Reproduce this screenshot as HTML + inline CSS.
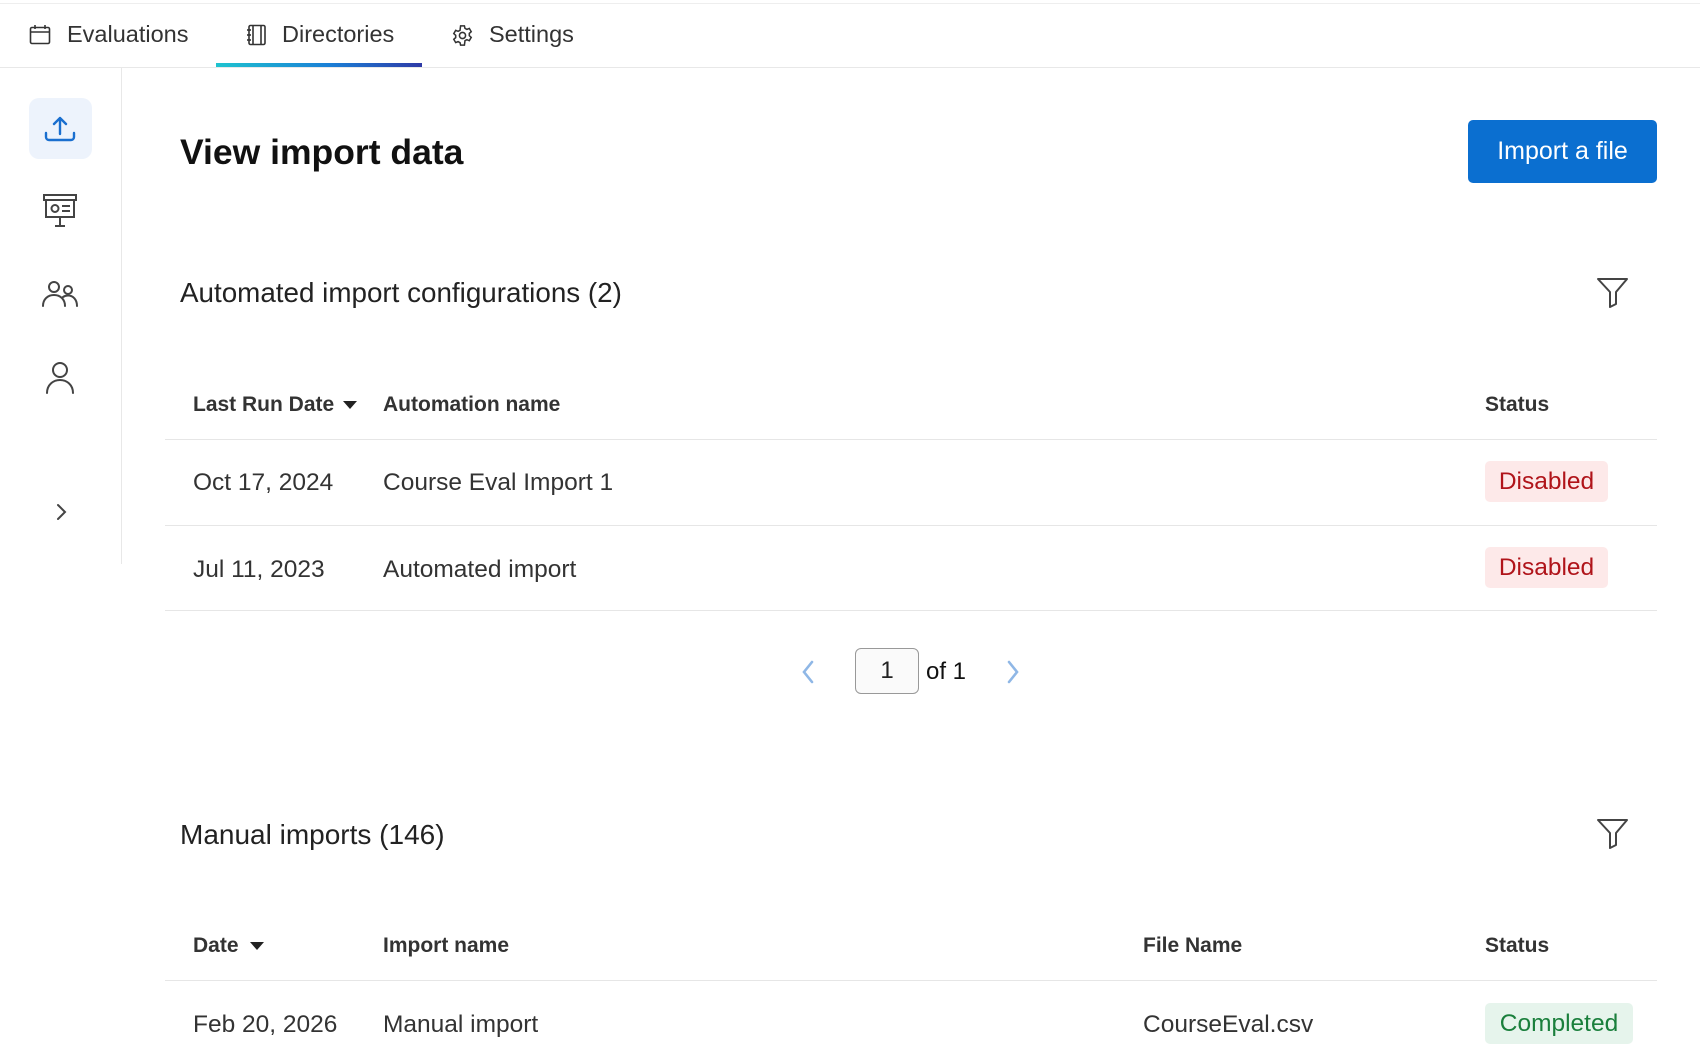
<!DOCTYPE html>
<html><head><meta charset="utf-8"><style>
*{margin:0;padding:0;box-sizing:border-box}
body{width:1700px;height:1064px;background:#fff;font-family:"Liberation Sans",Arial,sans-serif;color:#222;position:relative;overflow:hidden}
.a{position:absolute;white-space:nowrap}
.tab{font-size:23.5px;color:#333;top:21px}
.th{font-size:21px;font-weight:bold;color:#333}
.td{font-size:24.5px;color:#333}
.line{position:absolute;left:165px;width:1492px;height:1px;background:#e6e6e6}
.badge{position:absolute;border-radius:5px;font-size:24.5px;display:flex;align-items:center;justify-content:center}
svg{position:absolute}
</style></head><body>
<div class="a" style="left:0;top:3px;width:1700px;height:1px;background:#eee"></div>
<svg style="left:29px;top:24px" width="22" height="22" viewBox="0 0 22 22" fill="none" stroke="#333" stroke-width="1.6"><rect x="1.5" y="3.5" width="19" height="16" rx="1.5"/><line x1="1.5" y1="8" x2="20.5" y2="8"/><line x1="6" y1="1" x2="6" y2="5"/><line x1="16" y1="1" x2="16" y2="5"/></svg>
<div class="a tab" style="left:67px">Evaluations</div>
<svg style="left:246px;top:24px" width="22" height="22" viewBox="0 0 22 22" fill="none" stroke="#333" stroke-width="1.6"><rect x="3" y="1.5" width="16" height="19" rx="1.5"/><line x1="7" y1="1.5" x2="7" y2="20.5"/><line x1="15" y1="1.5" x2="15" y2="20.5"/><line x1="1" y1="6" x2="5" y2="6"/><line x1="1" y1="11" x2="5" y2="11"/><line x1="1" y1="16" x2="5" y2="16"/></svg>
<div class="a tab" style="left:282px">Directories</div>
<svg style="left:451px;top:24px" width="23" height="23" viewBox="0 0 24 24" fill="none" stroke="#333" stroke-width="1.6"><path d="M10 2h4l.6 2.6 2 1 2.5-1 2 3.4-2 1.8v2.4l2 1.8-2 3.4-2.5-1-2 1L14 22h-4l-.6-2.6-2-1-2.5 1-2-3.4 2-1.8v-2.4l-2-1.8 2-3.4 2.5 1 2-1z"/><circle cx="12" cy="12" r="3.2"/></svg>
<div class="a tab" style="left:489px">Settings</div>
<div class="a" style="left:216px;top:63px;width:206px;height:4px;background:linear-gradient(90deg,#1ec3cf,#1b7fd6 55%,#2e3aa6)"></div>
<div class="a" style="left:0;top:67px;width:1700px;height:1px;background:#e8e8e8"></div>
<div class="a" style="left:121px;top:68px;width:1px;height:496px;background:#e8e8e8"></div>
<div class="a" style="left:29px;top:98px;width:63px;height:61px;border-radius:10px;background:#edf3fc"></div>
<svg style="left:43px;top:115px" width="34" height="28" viewBox="0 0 34 28" fill="none" stroke="#1a6fcf" stroke-width="2.4" stroke-linecap="round" stroke-linejoin="round"><path d="M17 19V3M11 9l6-6 6 6"/><path d="M3 18v4a3 3 0 0 0 3 3h22a3 3 0 0 0 3-3v-4"/></svg>
<svg style="left:42px;top:193px" width="36" height="36" viewBox="0 0 36 36" fill="none" stroke="#444" stroke-width="2"><rect x="2" y="2" width="32" height="5"/><rect x="4" y="7" width="28" height="17"/><circle cx="13" cy="15.5" r="3.5"/><line x1="20" y1="13" x2="28" y2="13"/><line x1="20" y1="18" x2="28" y2="18"/><line x1="18" y1="24" x2="18" y2="33"/><line x1="13" y1="33" x2="23" y2="33"/></svg>
<svg style="left:42px;top:280px" width="36" height="28" viewBox="0 0 36 28" fill="none" stroke="#444" stroke-width="2" stroke-linecap="round"><circle cx="12" cy="7" r="5"/><path d="M1 26c0-7 5-11 11-11s11 4 11 11"/><circle cx="26" cy="10" r="4"/><path d="M21 17c1.5-1 3-1.5 5-1.5 5 0 9 4 9 10.5"/></svg>
<svg style="left:45px;top:361px" width="30" height="34" viewBox="0 0 30 34" fill="none" stroke="#444" stroke-width="2" stroke-linecap="round"><circle cx="15" cy="9" r="7"/><path d="M2 32c0-8 6-13 13-13s13 5 13 13"/></svg>
<svg style="left:55px;top:502px" width="14" height="20" viewBox="0 0 14 20" fill="none" stroke="#444" stroke-width="2" stroke-linecap="round"><path d="M3 3l7 7-7 7"/></svg>
<div class="a" style="left:180px;top:132px;font-size:35.5px;font-weight:bold;color:#111">View import data</div>
<div class="a" style="left:1468px;top:120px;width:189px;height:63px;background:#0b6fd0;border-radius:5px;color:#fff;font-size:25px;display:flex;align-items:center;justify-content:center">Import a file</div>
<div class="a" style="left:180px;top:277px;font-size:27.8px;color:#222">Automated import configurations (2)</div>
<svg style="left:1596px;top:276px" width="33" height="33" viewBox="0 0 33 33" fill="none" stroke="#444" stroke-width="2" stroke-linejoin="round"><path d="M2 3h29L20 16v12l-6 3V16z"/></svg>
<div class="a th" style="left:193px;top:393px">Last Run Date</div>
<svg style="left:343px;top:401px" width="14" height="8"><path d="M0 0h14L7 8z" fill="#222"/></svg>
<div class="a th" style="left:383px;top:393px">Automation name</div>
<div class="a th" style="left:1485px;top:393px">Status</div>
<div class="line" style="top:439px"></div>
<div class="a td" style="left:193px;top:469px">Oct 17, 2024</div>
<div class="a td" style="left:383px;top:469px">Course Eval Import 1</div>
<div class="badge" style="left:1485px;top:461px;width:123px;height:41px;background:#fde9e9;color:#b0141a">Disabled</div>
<div class="line" style="top:525px"></div>
<div class="a td" style="left:193px;top:556px">Jul 11, 2023</div>
<div class="a td" style="left:383px;top:556px">Automated import</div>
<div class="badge" style="left:1485px;top:547px;width:123px;height:41px;background:#fde9e9;color:#b0141a">Disabled</div>
<div class="line" style="top:610px"></div>
<svg style="left:800px;top:659px" width="16" height="26" viewBox="0 0 16 26" fill="none" stroke="#8fb7e6" stroke-width="2.6" stroke-linecap="round"><path d="M12 3L4 13l8 10"/></svg>
<div class="a" style="left:855px;top:648px;width:64px;height:46px;border:1.5px solid #999;border-radius:6px;background:#fafafa;font-size:24px;display:flex;align-items:center;justify-content:center;color:#222">1</div>
<div class="a" style="left:926px;top:658px;font-size:24px;color:#111">of 1</div>
<svg style="left:1005px;top:659px" width="16" height="26" viewBox="0 0 16 26" fill="none" stroke="#8fb7e6" stroke-width="2.6" stroke-linecap="round"><path d="M4 3l8 10-8 10"/></svg>
<div class="a" style="left:180px;top:819px;font-size:28px;color:#222">Manual imports (146)</div>
<svg style="left:1596px;top:817px" width="33" height="33" viewBox="0 0 33 33" fill="none" stroke="#444" stroke-width="2" stroke-linejoin="round"><path d="M2 3h29L20 16v12l-6 3V16z"/></svg>
<div class="a th" style="left:193px;top:934px">Date</div>
<svg style="left:250px;top:942px" width="14" height="8"><path d="M0 0h14L7 8z" fill="#222"/></svg>
<div class="a th" style="left:383px;top:934px">Import name</div>
<div class="a th" style="left:1143px;top:934px">File Name</div>
<div class="a th" style="left:1485px;top:934px">Status</div>
<div class="line" style="top:980px"></div>
<div class="a td" style="left:193px;top:1011px">Feb 20, 2026</div>
<div class="a td" style="left:383px;top:1011px">Manual import</div>
<div class="a td" style="left:1143px;top:1011px">CourseEval.csv</div>
<div class="badge" style="left:1485px;top:1003px;width:148px;height:41px;background:#e6f4ec;color:#1a7f3c">Completed</div>
</body></html>
